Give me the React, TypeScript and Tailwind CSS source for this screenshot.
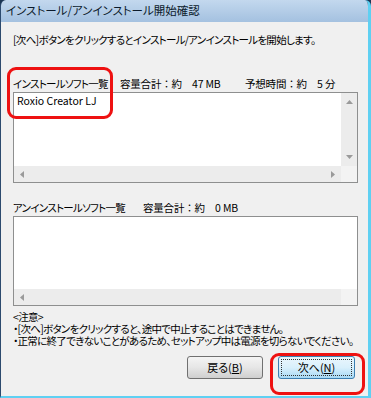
import React from 'react';

const jp = "font-['Noto_Sans_CJK_JP',sans-serif] [font-feature-settings:'palt']";
const plain = "[font-feature-settings:normal] tracking-[-0.2px]";

const ArrowUp = () => (
  <svg width="7" height="4" viewBox="0 0 7 4"><path d="M0 4 L3.5 0 L7 4 Z" fill="#9a9a9a" /></svg>
);
const ArrowDown = () => (
  <svg width="7" height="4" viewBox="0 0 7 4"><path d="M0 0 L3.5 4 L7 0 Z" fill="#9a9a9a" /></svg>
);
const ArrowLeft = () => (
  <svg width="4" height="7" viewBox="0 0 4 7"><path d="M4 0 L0 3.5 L4 7 Z" fill="#9a9a9a" /></svg>
);
const ArrowRight = () => (
  <svg width="4" height="7" viewBox="0 0 4 7"><path d="M0 0 L4 3.5 L0 7 Z" fill="#9a9a9a" /></svg>
);

const HScroll = ({ right }: { right: boolean }) => (
  <div className="flex h-[16px] shrink-0">
    <div className="flex flex-1 items-center justify-between bg-[#ececec] px-[6px]">
      <ArrowLeft />
      {right && <ArrowRight />}
    </div>
    <div className="w-[16px] bg-[#f3f3f3]" />
  </div>
);

export default function App() {
  return (
    <div className={`relative flex h-[398px] w-[371px] flex-col bg-[#1c3553] ${jp}`}>
      <div className="flex flex-1 flex-col overflow-hidden rounded-t-[6px] border-l border-r-[3px] border-b-[2px] border-l-[#2c4a6e] border-r-[#5fd0f2] border-b-[#5fd0f2]">
        {/* title bar */}
        <div className="flex h-[22px] shrink-0 items-center bg-gradient-to-b from-[#c3d8ee] to-[#a4c1e0] pl-[5px] text-[11.5px] leading-none text-[#0b1a2b]">
          インストール/アンインストール開始確認
        </div>

        <div className="flex flex-1 flex-col bg-[#f0f0f0] pl-[12px] pr-[10px] text-[10.5px] tracking-[-0.7px] text-black whitespace-nowrap">
          <div className="mt-[11px] h-[14px] leading-[14px]">[次へ]ボタンをクリックするとインストール/アンインストールを開始します。</div>

          {/* install list */}
          <div className="mt-[30px] flex h-[14px] leading-[14px]">
            <span className="w-[107px]">インストールソフト一覧</span>
            <span className={`w-[125px] ${plain}`}>容量合計：約　47 MB</span>
            <span className={plain}>予想時間：約　5 分</span>
          </div>
          <div className="mt-px flex h-[91px] shrink-0 flex-col border border-[#8e8f8f] bg-white">
            <div className="flex flex-1">
              <div className="flex-1 pl-[3px] pt-px leading-[14px] tracking-normal">Roxio Creator LJ</div>
              <div className="flex w-[16px] flex-col items-center justify-between bg-[#ececec] py-[7px]">
                <ArrowUp />
                <ArrowDown />
              </div>
            </div>
            <HScroll right />
          </div>

          {/* uninstall list */}
          <div className="mt-[18px] flex h-[14px] leading-[14px]">
            <span className="w-[130px]">アンインストールソフト一覧</span>
            <span className={plain}>容量合計：約　0 MB</span>
          </div>
          <div className="mt-px flex h-[90px] shrink-0 flex-col border border-[#8e8f8f] bg-white">
            <div className="flex-1" />
            <HScroll right={false} />
          </div>

          {/* notes */}
          <div className="mt-[5px] leading-[12px]">
            <div>&lt;注意&gt;</div>
            <div>・[次へ]ボタンをクリックすると、途中で中止することはできません。</div>
            <div>・正常に終了できないことがあるため、セットアップ中は電源を切らないでください。</div>
          </div>

          {/* buttons */}
          <div className="mt-[9px] flex justify-end gap-[15px] pr-[3px] tracking-normal">
            <button className="flex h-[23px] w-[76px] items-center justify-center rounded-[3px] border border-[#707070] bg-gradient-to-b from-[#f4f4f4] via-[#e6e6e6] to-[#cfcfcf] text-[11px] text-black">
              戻る(<span className="underline">B</span>)
            </button>
            <button className="flex h-[23px] w-[77px] items-center justify-center rounded-[3px] border border-[#3c7fb1] bg-gradient-to-b from-[#eaf6fd] via-[#d9f0fc] to-[#a7d9f5] p-[2px] text-[11px] text-black">
              <span className="flex h-full w-full items-center justify-center border border-dotted border-[#333]">
                次へ(<span className="underline">N</span>)
              </span>
            </button>
          </div>
        </div>
      </div>

      {/* red highlight marks */}
      <div className="pointer-events-none absolute left-[7px] top-[67px] h-[52px] w-[106px] rounded-[9px] border-[3px] border-[#ee1111]" />
      <div className="pointer-events-none absolute left-[270px] top-[353px] h-[42px] w-[95px] rounded-[9px] border-[3px] border-[#ee1111]" />
    </div>
  );
}
